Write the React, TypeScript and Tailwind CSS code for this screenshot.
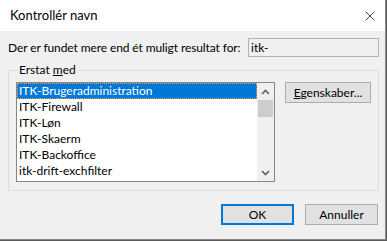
import { X } from "lucide-react";

const items = [
  "ITK-Brugeradministration",
  "ITK-Firewall",
  "ITK-Løn",
  "ITK-Skaerm",
  "ITK-Backoffice",
  "itk-drift-exchfilter",
];

function Chevron({ down = false }: { down?: boolean }) {
  return (
    <svg width="9" height="6" viewBox="0 0 9 6" className={down ? "rotate-180" : ""}>
      <path d="M1 5 L4.5 1.5 L8 5" fill="none" stroke="#606060" strokeWidth="1.6" />
    </svg>
  );
}

export default function App() {
  return (
    <div className="h-[241px] w-[387px] bg-[#5a5a5a] font-['Lato',sans-serif] text-[12px] text-black">
      <div className="flex h-[240px] w-[386px] flex-col border-r border-b border-[#8a8a8a] bg-[#f0f0f0]">
        <div className="flex h-[31px] shrink-0 items-center justify-between bg-white pl-[10px] pr-[7px]">
          <span className="text-[13px]">Kontrollér navn</span>
          <X size={16} strokeWidth={1.2} color="#111" />
        </div>

        <div className="mt-[7px] flex items-center pl-[8px]">
          <span className="w-[240px] whitespace-nowrap tracking-[-0.1px]">
            Der er fundet mere end ét muligt resultat for:
          </span>
          <div className="flex h-[19px] w-[131px] items-center border border-[#b4b4b4] bg-[#f0f0f0] pl-[2px]">
            itk-
          </div>
        </div>

        <fieldset className="mx-[8px] mt-[6px] h-[128px] w-[371px] border border-[#dcdcdc] px-[7px]">
          <legend className="ml-[1px] px-[2px] leading-[14px]">
            Erstat <span className="underline">m</span>ed
          </legend>
          <div className="mt-[5px] flex items-start gap-[10px]">
            <div className="flex h-[100px] w-[259px] border border-[#828790] bg-white">
              <ul className="flex-1">
                {items.map((item, i) => (
                  <li
                    key={item}
                    className={
                      i === 0
                        ? "flex h-[16px] items-center bg-[#0078d7] pl-[2px] text-white outline outline-1 -outline-offset-1 outline-dotted outline-[#f5a040]"
                        : "flex h-[16px] items-center pl-[2px]"
                    }
                  >
                    {item}
                  </li>
                ))}
              </ul>
              <div className="flex w-[17px] flex-col items-center bg-[#f0f0f0]">
                <div className="flex h-[17px] items-center justify-center">
                  <Chevron />
                </div>
                <div className="h-[17px] w-[15px] bg-[#cdcdcd]" />
                <div className="flex-1" />
                <div className="flex h-[17px] items-center justify-center">
                  <Chevron down />
                </div>
              </div>
            </div>
            <button className="h-[21px] w-[86px] whitespace-nowrap border border-[#adadad] bg-[#e1e1e1]">
              <span className="underline">E</span>genskaber...
            </button>
          </div>
        </fieldset>

        <div className="mt-[13px] flex justify-end gap-[11px] pr-[7px]">
          <button className="h-[21px] w-[73px] border-2 border-[#0078d7] bg-[#e1e1e1]">OK</button>
          <button className="h-[21px] w-[73px] border border-[#adadad] bg-[#e1e1e1]">Annuller</button>
        </div>
      </div>
    </div>
  );
}
